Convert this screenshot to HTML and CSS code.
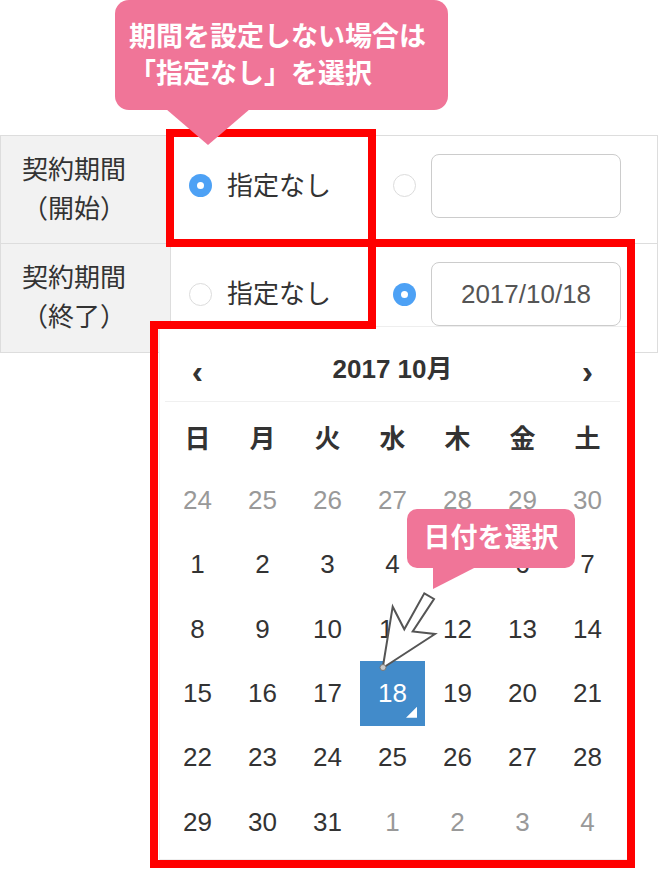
FILE: index.html
```html
<!DOCTYPE html>
<html lang="ja">
<head>
<meta charset="utf-8">
<title>契約期間</title>
<link rel="stylesheet" href="styles.css">
</head>
<body>
<div class="page">
  <div class="callout callout-main">期間を設定しない場合は<br>「指定なし」を選択</div>

  <div class="form">
    <div class="row">
      <div class="label"><span>契約期間<br>（開始）</span></div>
      <div class="field">
        <div class="opt opt-none"><span class="radio checked"></span><span class="opt-text">指定なし</span></div>
        <div class="opt"><span class="radio"></span><span class="input"></span></div>
      </div>
    </div>
    <div class="row">
      <div class="label"><span>契約期間<br>（終了）</span></div>
      <div class="field">
        <div class="opt opt-none"><span class="radio"></span><span class="opt-text">指定なし</span></div>
        <div class="opt"><span class="radio checked"></span><span class="input">2017/10/18</span></div>
      </div>
    </div>
  </div>

  <div class="datepicker">
    <div class="dp-head">
      <span class="dp-nav">‹</span>
      <span class="dp-title">2017 10月</span>
      <span class="dp-nav">›</span>
    </div>
    <div class="dp-grid">
      <span class="dow">日</span><span class="dow">月</span><span class="dow">火</span><span class="dow">水</span><span class="dow">木</span><span class="dow">金</span><span class="dow">土</span>
      <span class="muted">24</span><span class="muted">25</span><span class="muted">26</span><span class="muted">27</span><span class="muted">28</span><span class="muted">29</span><span class="muted">30</span>
      <span>1</span><span>2</span><span>3</span><span>4</span><span>5</span><span>6</span><span>7</span>
      <span>8</span><span>9</span><span>10</span><span>11</span><span>12</span><span>13</span><span>14</span>
      <span>15</span><span>16</span><span>17</span><span class="active">18</span><span>19</span><span>20</span><span>21</span>
      <span>22</span><span>23</span><span>24</span><span>25</span><span>26</span><span>27</span><span>28</span>
      <span>29</span><span>30</span><span>31</span><span class="muted">1</span><span class="muted">2</span><span class="muted">3</span><span class="muted">4</span>
    </div>
  </div>

  <svg class="frames" width="660" height="869" viewBox="0 0 660 869">
    <rect x="170" y="133" width="202" height="110" fill="none" stroke="#ff0000" stroke-width="8"/>
    <polygon points="372,243 631,243 631,864 154,864 154,325 372,325" fill="none" stroke="#ff0000" stroke-width="8"/>
  </svg>

  <div class="callout callout-date">日付を選択</div>

  <svg class="pointer" width="75" height="90" viewBox="0 0 75 90">
    <polygon points="54.3,8.3 64,14 42.7,46.5 65,49 12.7,83 22.7,21.7 34.3,44.3" fill="#fff" stroke="#555" stroke-width="2" stroke-linejoin="miter"/>
    <circle cx="13" cy="82.5" r="3" fill="#c8c8c8" stroke="#777" stroke-width="1"/>
  </svg>
</div>
</body>
</html>
```

FILE: styles.css
```css
html, body {
  margin: 0;
  padding: 0;
  background: #fff;
}

body {
  font-family: "Liberation Sans", "Noto Sans CJK JP", sans-serif;
  color: #333;
}

.page {
  position: relative;
  width: 660px;
  height: 869px;
  overflow: hidden;
}

/* annotation callouts */
.callout {
  background: #f07598;
  color: #fff;
  font-weight: 700;
  font-size: 27px;
}

.callout-main {
  position: relative;
  z-index: 5;
  margin-left: 115px;
  margin-bottom: 25px;
  width: 333px;
  height: 110px;
  box-sizing: border-box;
  padding: 19px 0 0 14px;
  line-height: 37px;
  border-radius: 14px;
}

.callout-main::after {
  content: "";
  position: absolute;
  left: 51px;
  top: 109px;
  width: 84px;
  height: 36px;
  background: #f07598;
  clip-path: polygon(0 0, 100% 0, 50% 100%);
}

.callout-date {
  position: absolute;
  z-index: 5;
  left: 407px;
  top: 509px;
  width: 168px;
  height: 59px;
  border-radius: 10px;
  text-align: center;
  line-height: 59px;
}

.callout-date::after {
  content: "";
  position: absolute;
  left: 26px;
  top: 57px;
  width: 45px;
  height: 23px;
  background: #f07598;
  clip-path: polygon(0 0, 0 100%, 100% 0);
}

/* form table */
.form {
  position: relative;
  z-index: 1;
  width: 658px;
  box-sizing: border-box;
  border: 1px solid #ddd;
}

.row {
  display: grid;
  grid-template-columns: 170px 1fr;
  height: 107px;
}

.row + .row {
  border-top: 1px solid #ddd;
  height: 108px;
}

.label {
  box-sizing: border-box;
  background: #f2f2f2;
  border-right: 1px solid #ddd;
  padding-left: 21px;
  font-size: 26px;
  line-height: 39px;
  display: flex;
  align-items: center;
  color: #333;
}

.field {
  display: flex;
  align-items: center;
  padding: 0 0 8px 18px;
}

.opt {
  display: flex;
  align-items: center;
  gap: 15px;
}

.opt-none {
  width: 204px;
}

.radio {
  position: relative;
  flex: none;
  width: 23px;
  height: 23px;
  box-sizing: border-box;
  border-radius: 50%;
  border: 1.5px solid #dcdcdc;
  background: #fff;
}

.radio.checked {
  border: none;
  background: #4da1f5;
}

.radio.checked::after {
  content: "";
  position: absolute;
  left: 8px;
  top: 8px;
  width: 7px;
  height: 7px;
  border-radius: 50%;
  background: #fff;
}

.opt-text {
  font-size: 26px;
  line-height: 36px;
  color: #333;
}

.input {
  width: 190px;
  height: 64px;
  box-sizing: border-box;
  border: 1.5px solid #ccc;
  border-radius: 8px;
  display: flex;
  align-items: center;
  justify-content: center;
  font-size: 26px;
  color: #555;
}

/* datepicker dropdown */
.datepicker {
  position: absolute;
  z-index: 2;
  left: 159px;
  top: 326px;
  width: 469px;
  height: 534px;
  box-sizing: border-box;
  border: 1px solid #eee;
  background: #fff;
  padding: 0 7px 0 5px;
}

.dp-head {
  display: grid;
  grid-template-columns: repeat(7, 65px);
  height: 75px;
  box-sizing: border-box;
  padding-top: 10px;
  align-items: center;
  border-bottom: 1px solid #f0f0f0;
  font-weight: 700;
  font-size: 26px;
  line-height: 40px;
  color: #333;
}

.dp-title {
  grid-column: 2 / span 5;
  text-align: center;
}

.dp-nav {
  text-align: center;
  font-size: 34px;
  padding-top: 4px;
}

.dp-grid {
  display: grid;
  grid-template-columns: repeat(7, 65px);
  grid-auto-rows: 64.33px;
  margin-top: 2px;
  font-size: 26px;
}

.dp-grid > span {
  display: flex;
  align-items: center;
  justify-content: center;
}

.dow {
  font-weight: 700;
}

.muted {
  color: #999;
}

.dp-grid > .active {
  position: relative;
  background: #428bca;
  color: #fff;
}

.active::after {
  content: "";
  position: absolute;
  right: 8px;
  bottom: 8px;
  width: 11px;
  height: 11px;
  background: #fff;
  clip-path: polygon(100% 0, 100% 100%, 0 100%);
}

/* annotation overlays */
.frames {
  position: absolute;
  left: 0;
  top: 0;
  z-index: 3;
  pointer-events: none;
}

.pointer {
  position: absolute;
  left: 370px;
  top: 585px;
  z-index: 6;
  pointer-events: none;
}
```
